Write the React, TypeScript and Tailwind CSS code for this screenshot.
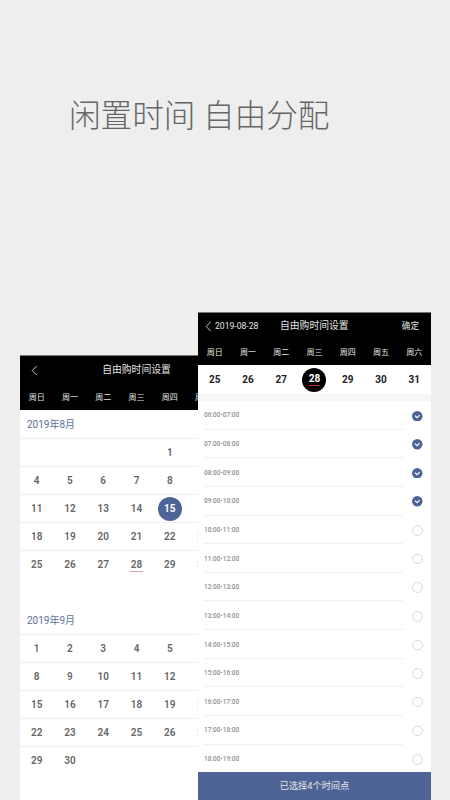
import React from 'react';

const font = { fontFamily: 'Roboto, "Noto Sans CJK SC", sans-serif' };
const weekdays = ['周日', '周一', '周二', '周三', '周四', '周五', '周六'];

const august: (number | null)[][] = [
  [null, null, null, null, 1, 2, 3],
  [4, 5, 6, 7, 8, 9, 10],
  [11, 12, 13, 14, 15, 16, 17],
  [18, 19, 20, 21, 22, 23, 24],
  [25, 26, 27, 28, 29, 30, 31],
];
const september: (number | null)[][] = [
  [1, 2, 3, 4, 5, 6, 7],
  [8, 9, 10, 11, 12, 13, 14],
  [15, 16, 17, 18, 19, 20, 21],
  [22, 23, 24, 25, 26, 27, 28],
  [29, 30, null, null, null, null, null],
];

const slots = [
  '06:00-07:00', '07:00-08:00', '08:00-09:00', '09:00-10:00', '10:00-11:00',
  '11:00-12:00', '12:00-13:00', '13:00-14:00', '14:00-15:00', '15:00-16:00',
  '16:00-17:00', '17:00-18:00', '18:00-19:00',
];

const Back = () => (
  <svg width="7" height="11" viewBox="0 0 7 11" fill="none" stroke="#e0e0e0" strokeWidth="0.9" className="block">
    <path d="M5.8 0.8 L1.2 5.5 L5.8 10.2" />
  </svg>
);

const WeekRow = () => (
  <div className="grid grid-cols-7 text-[8px] text-[#e6e6e6]">
    {weekdays.map((d) => (
      <div key={d} className="text-center leading-[12px]">{d}</div>
    ))}
  </div>
);

const Month = ({ rows, isAugust }: { rows: (number | null)[][]; isAugust?: boolean }) => (
  <div>
    {rows.map((row, i) => (
      <div key={i} className="grid h-[28px] grid-cols-7 border-t border-[#eeeeee] text-[10px] font-semibold text-[#666666]">
        {row.map((d, j) => (
          <div key={j} className="flex items-center justify-center">
            {isAugust && d === 15 ? (
              <span className="flex h-[24px] w-[24px] items-center justify-center rounded-full bg-[#4e6496] font-bold text-white">15</span>
            ) : isAugust && d === 28 ? (
              <span className="border-b border-[#e2a0a0] px-[1px] leading-[13px]">{d}</span>
            ) : (
              d
            )}
          </div>
        ))}
      </div>
    ))}
  </div>
);

const Slot = ({ label, checked }: { label: string; checked: boolean }) => (
  <div className="flex h-[28.65px] items-center pl-[6px] pr-[8.5px]">
    <div className="flex h-full w-[199px] items-center border-b border-[#f0f0f0] pt-[3px]">
      <span className="w-[35px] whitespace-nowrap text-[6.5px] font-medium text-[#8f8f8f]">{label}</span>
    </div>
    <div className="ml-auto pt-[1px]">
      {checked ? (
        <svg width="10.5" height="10.5" viewBox="0 0 11 11" className="block">
          <circle cx="5.5" cy="5.5" r="5.5" fill="#4e6496" />
          <path d="M3 4.8 L5.4 7 L8 4.4" fill="none" stroke="#fff" strokeWidth="1.2" />
        </svg>
      ) : (
        <div className="h-[10.5px] w-[10.5px] rounded-full border border-[#d9d9d9]" />
      )}
    </div>
  </div>
);

export default function App() {
  return (
    <div className="flex h-[800px] w-[450px] flex-col overflow-hidden bg-[#eeeeee]" style={font}>
      <h1 className="mt-[94px] h-[218px] pl-[69px] text-[31.6px] font-light leading-[46px] text-[#666666]">闲置时间 自由分配</h1>
      <div className="flex h-[488px] items-end pl-[20px]">
        <div className="h-[445px] w-[178px] overflow-hidden bg-white">
          <div className="w-[233px]">
            <div className="h-[55px] border-t border-[#777777] bg-black">
              <div className="relative flex h-[29px] items-center justify-center text-[9.8px] text-[#e4e4e4]">
                <span className="absolute left-[11px] top-[9px]"><Back /></span>
                自由购时间设置
              </div>
              <div className="pt-[7px]"><WeekRow /></div>
            </div>
            <div className="flex h-[28px] items-center pl-[7px] text-[10px] text-[#5d7099]">2019年8月</div>
            <Month rows={august} isAugust />
            <div className="flex h-[56px] items-end pb-[6px] pl-[7px] text-[10px] text-[#5d7099]">2019年9月</div>
            <Month rows={september} />
          </div>
        </div>
        <div className="flex h-[488px] w-[233px] flex-col bg-white">
          <div className="h-[53px] border-t border-[#777777] bg-black">
            <div className="flex h-[27px] items-center pl-[7px] pr-[12px] text-[#e4e4e4]">
              <Back />
              <span className="ml-[3px] w-[44px] whitespace-nowrap text-[8.6px]">2019-08-28</span>
              <span className="ml-[21px] text-[9.8px]">自由购时间设置</span>
              <span className="ml-auto text-[8.6px]">确定</span>
            </div>
            <div className="pt-[7px]"><WeekRow /></div>
          </div>
          <div className="grid h-[29px] grid-cols-7 text-[10px] font-bold text-[#222222]">
            {[25, 26, 27, 28, 29, 30, 31].map((d) => (
              <div key={d} className="flex items-center justify-center">
                {d === 28 ? (
                  <span className="flex h-[24px] w-[24px] items-center justify-center rounded-full bg-black text-white">
                    <span className="border-b border-[#c0303a] leading-[12px]">{d}</span>
                  </span>
                ) : (
                  d
                )}
              </div>
            ))}
          </div>
          <div className="h-[7px] bg-[#f6f6f6]" />
          <div className="h-[371px] overflow-hidden">
            {slots.map((s, i) => (
              <Slot key={s} label={s} checked={i < 4} />
            ))}
          </div>
          <div className="flex h-[28px] items-center justify-center bg-[#4e6496] text-[9.2px] text-[#e8e8e8]">已选择4个时间点</div>
        </div>
      </div>
    </div>
  );
}
